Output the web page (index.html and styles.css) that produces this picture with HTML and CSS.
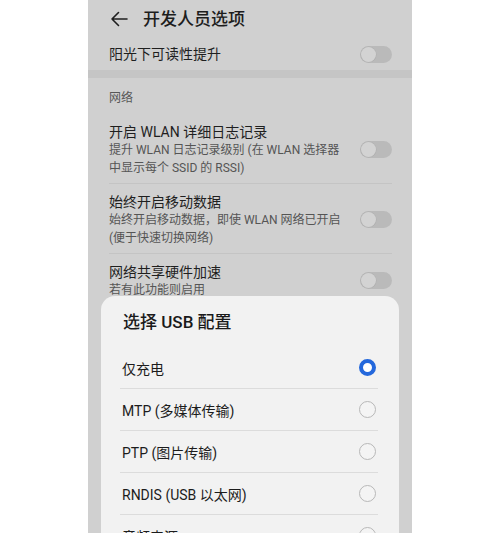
FILE: index.html
```html
<!DOCTYPE html>
<html lang="zh-CN">
<head>
<meta charset="utf-8">
<title>开发人员选项</title>
<link rel="stylesheet" href="styles.css">
</head>
<body>
<div class="screen">
  <header class="appbar">
    <svg class="back" width="18" height="16" viewBox="0 0 18 16" aria-hidden="true">
      <path d="M17 8 H2 M8.5 1.5 L2 8 L8.5 14.5" fill="none" stroke="#1f1f1f" stroke-width="1.6" stroke-linecap="round" stroke-linejoin="round"/>
    </svg>
    <h1 class="appbar-title">开发人员选项</h1>
  </header>

  <div class="row row-single">
    <div class="row-title">阳光下可读性提升</div>
    <span class="toggle"></span>
  </div>

  <div class="band"></div>

  <div class="section-label">网络</div>

  <div class="row row-item">
    <div class="row-text">
      <div class="row-title">开启 WLAN 详细日志记录</div>
      <div class="row-sub">提升 WLAN 日志记录级别 (在 WLAN 选择器<br>中显示每个 SSID 的 RSSI)</div>
    </div>
    <span class="toggle"></span>
  </div>

  <div class="row row-item">
    <div class="row-text">
      <div class="row-title">始终开启移动数据</div>
      <div class="row-sub">始终开启移动数据，即使 WLAN 网络已开启<br>(便于快速切换网络)</div>
    </div>
    <span class="toggle"></span>
  </div>

  <div class="row row-item row-last">
    <div class="row-text">
      <div class="row-title">网络共享硬件加速</div>
      <div class="row-sub">若有此功能则启用</div>
    </div>
    <span class="toggle"></span>
  </div>

  <div class="dialog">
    <div class="dialog-title">选择 USB 配置</div>
    <ul class="options">
      <li class="option"><span class="option-label">仅充电</span><span class="radio radio-on"></span></li>
      <li class="option"><span class="option-label">MTP (多媒体传输)</span><span class="radio"></span></li>
      <li class="option"><span class="option-label">PTP (图片传输)</span><span class="radio"></span></li>
      <li class="option"><span class="option-label">RNDIS (USB 以太网)</span><span class="radio"></span></li>
      <li class="option"><span class="option-label">音频来源</span><span class="radio"></span></li>
    </ul>
  </div>
</div>
</body>
</html>
```

FILE: styles.css
```css
* { box-sizing: border-box; }

html, body {
  margin: 0;
  padding: 0;
  background: #ffffff;
}

body {
  font-family: Roboto, "Noto Sans CJK SC", "Noto Sans", sans-serif;
  color: #1f1f1f;
}

.screen {
  position: relative;
  width: 324px;
  height: 533px;
  margin: 0 auto;
  background: #d0d0d0;
  overflow: hidden;
}

.appbar {
  height: 38px;
  display: flex;
  align-items: center;
  padding-left: 22px;
  gap: 15px;
}

.back { display: block; flex: none; }

.appbar-title {
  margin: 0;
  font-size: 17px;
  font-weight: 500;
  line-height: 24px;
  color: #1d1d1d;
}

.row {
  display: flex;
  align-items: center;
  justify-content: space-between;
  margin: 0 20px 0 21px;
}

.row-single {
  height: 32px;
}

.row-title {
  font-size: 14px;
  line-height: 20px;
  color: #1f1f1f;
  white-space: nowrap;
}

.row-item {
  padding: 8px 0 6px;
  border-bottom: 1px solid #c4c4c4;
}

.row-last { border-bottom: none; }

.row-sub {
  font-size: 12px;
  line-height: 17.5px;
  color: #555555;
  white-space: nowrap;
}

.toggle {
  position: relative;
  flex: none;
  width: 32px;
  height: 17px;
  border-radius: 9px;
  background: #bababa;
}

.toggle::before {
  content: "";
  position: absolute;
  left: 1px;
  top: 1px;
  width: 15px;
  height: 15px;
  border-radius: 50%;
  background: #d3d3d3;
  box-shadow: 0 0 0 0.6px #b0b0b0;
}

.band {
  height: 8px;
  background: #c5c5c5;
}

.section-label {
  padding: 12px 21px 8px;
  font-size: 12px;
  line-height: 16px;
  color: #575757;
}

.dialog {
  position: absolute;
  left: 13px;
  top: 296px;
  width: 298px;
  height: 260px;
  border-radius: 14px;
  background: #f2f2f2;
}

.dialog-title {
  padding: 14px 22px 13px;
  font-size: 17px;
  font-weight: 500;
  line-height: 24px;
  color: #1a1a1a;
}

.options {
  list-style: none;
  margin: 0;
  padding: 0 21px 0 19px;
}

.option {
  height: 42px;
  display: flex;
  align-items: center;
  justify-content: space-between;
  padding: 0 2px 0 2px;
  border-bottom: 1px solid #dcdcdc;
}

.option-label {
  font-size: 14px;
  color: #1c1c1c;
}

.radio {
  flex: none;
  width: 17px;
  height: 17px;
  border-radius: 50%;
  border: 1.2px solid #b8b8b8;
  background: #f4f4f4;
}

.radio-on {
  border: 4.5px solid #2468dc;
  background: #ffffff;
}
```
